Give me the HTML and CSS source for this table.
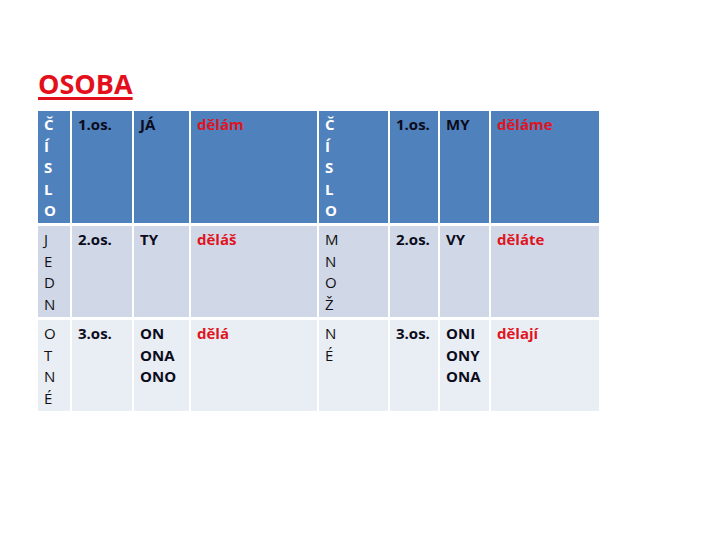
FILE: index.html
```html
<!DOCTYPE html>
<html lang="cs">
<head>
<meta charset="utf-8">
<title>OSOBA</title>
<link rel="stylesheet" href="styles.css">
</head>
<body>
<h1 class="title">OSOBA</h1>
<div class="table">
  <div class="cell head first">Č<br>Í<br>S<br>L<br>O</div>
  <div class="cell head">1.os.</div>
  <div class="cell head">JÁ</div>
  <div class="cell head red">dělám</div>
  <div class="cell head first">Č<br>Í<br>S<br>L<br>O</div>
  <div class="cell head">1.os.</div>
  <div class="cell head">MY</div>
  <div class="cell head red">děláme</div>

  <div class="cell odd first">J<br>E<br>D<br>N</div>
  <div class="cell odd">2.os.</div>
  <div class="cell odd">TY</div>
  <div class="cell odd red">děláš</div>
  <div class="cell odd first">M<br>N<br>O<br>Ž</div>
  <div class="cell odd">2.os.</div>
  <div class="cell odd">VY</div>
  <div class="cell odd red">děláte</div>

  <div class="cell even first">O<br>T<br>N<br>É</div>
  <div class="cell even">3.os.</div>
  <div class="cell even">ON<br>ONA<br>ONO</div>
  <div class="cell even red">dělá</div>
  <div class="cell even first">N<br>É</div>
  <div class="cell even">3.os.</div>
  <div class="cell even">ONI<br>ONY<br>ONA</div>
  <div class="cell even red">dělají</div>
</div>
</body>
</html>
```
FILE: styles.css
```css
html, body {
  margin: 0;
  padding: 0;
  background: #ffffff;
}
body {
  width: 720px;
  height: 540px;
  font-family: "Open Sans", "Liberation Sans", sans-serif;
}
.title {
  margin: 0;
  padding: 66px 0 0 38px;
  height: 45px;
  font-size: 27px;
  line-height: 36px;
  font-weight: 700;
  color: #e3101c;
  text-decoration: underline;
  text-decoration-thickness: 3px;
  text-underline-offset: 3px;
}
.table {
  margin-left: 38px;
  display: grid;
  grid-template-columns: 32px 60px 55px 126px 69px 48px 49px 108px;
  grid-template-rows: 112px 91px 91px;
  gap: 3px 2px;
}
.cell {
  padding: 3px 0 0 6px;
  font-size: 15px;
  line-height: 21.5px;
  font-weight: 700;
  color: #0b0b1a;
}
.head { background: #4f81bd; }
.odd { background: #d0d8e8; }
.even { background: #e9edf4; }
.head.first { color: #ffffff; }
.odd.first, .even.first { font-weight: 400; color: #111111; }
.red { color: #e0141e; }
```
